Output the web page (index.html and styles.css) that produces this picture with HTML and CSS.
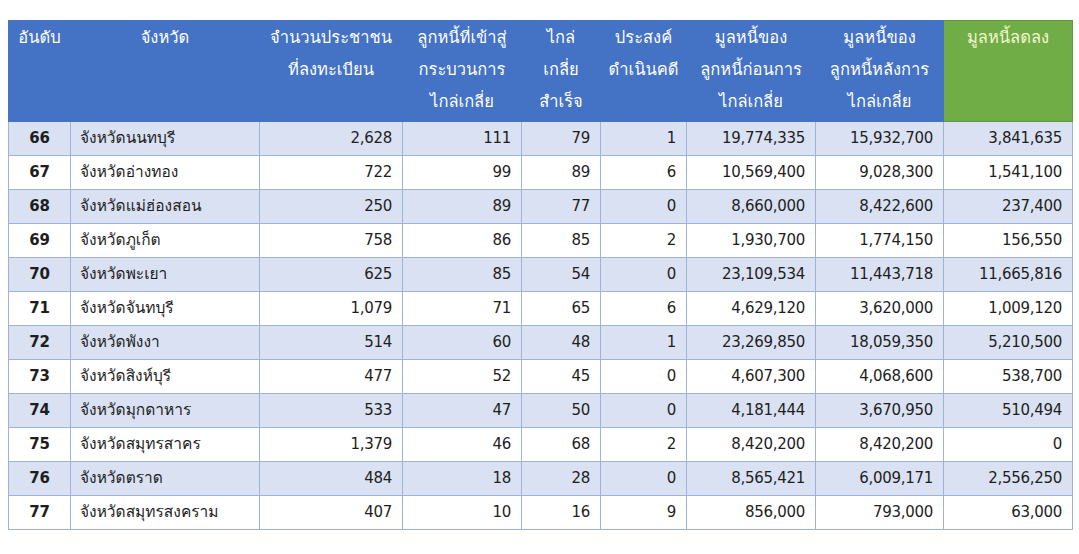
FILE: index.html
```html
<!DOCTYPE html>
<html lang="th">
<head>
<meta charset="utf-8">
<title>ตารางมูลหนี้</title>
<link rel="stylesheet" href="styles.css">
</head>
<body>
<table class="debt-table">
  <colgroup>
    <col class="c-rank"><col class="c-prov"><col class="c-pop"><col class="c-debtor"><col class="c-ok"><col class="c-sue"><col class="c-before"><col class="c-after"><col class="c-diff">
  </colgroup>
  <thead>
    <tr>
      <th>อันดับ</th>
      <th>จังหวัด</th>
      <th>จำนวนประชาชน<br>ที่ลงทะเบียน</th>
      <th>ลูกหนี้ที่เข้าสู่<br>กระบวนการ<br>ไกล่เกลี่ย</th>
      <th>ไกล่<br>เกลี่ย<br>สำเร็จ</th>
      <th>ประสงค์<br>ดำเนินคดี</th>
      <th>มูลหนี้ของ<br>ลูกหนี้ก่อนการ<br>ไกล่เกลี่ย</th>
      <th>มูลหนี้ของ<br>ลูกหนี้หลังการ<br>ไกล่เกลี่ย</th>
      <th class="th-green">มูลหนี้ลดลง</th>
    </tr>
  </thead>
  <tbody>
    <tr><td class="rank">66</td><td class="prov">จังหวัดนนทบุรี</td><td>2,628</td><td>111</td><td>79</td><td>1</td><td>19,774,335</td><td>15,932,700</td><td>3,841,635</td></tr>
    <tr><td class="rank">67</td><td class="prov">จังหวัดอ่างทอง</td><td>722</td><td>99</td><td>89</td><td>6</td><td>10,569,400</td><td>9,028,300</td><td>1,541,100</td></tr>
    <tr><td class="rank">68</td><td class="prov">จังหวัดแม่ฮ่องสอน</td><td>250</td><td>89</td><td>77</td><td>0</td><td>8,660,000</td><td>8,422,600</td><td>237,400</td></tr>
    <tr><td class="rank">69</td><td class="prov">จังหวัดภูเก็ต</td><td>758</td><td>86</td><td>85</td><td>2</td><td>1,930,700</td><td>1,774,150</td><td>156,550</td></tr>
    <tr><td class="rank">70</td><td class="prov">จังหวัดพะเยา</td><td>625</td><td>85</td><td>54</td><td>0</td><td>23,109,534</td><td>11,443,718</td><td>11,665,816</td></tr>
    <tr><td class="rank">71</td><td class="prov">จังหวัดจันทบุรี</td><td>1,079</td><td>71</td><td>65</td><td>6</td><td>4,629,120</td><td>3,620,000</td><td>1,009,120</td></tr>
    <tr><td class="rank">72</td><td class="prov">จังหวัดพังงา</td><td>514</td><td>60</td><td>48</td><td>1</td><td>23,269,850</td><td>18,059,350</td><td>5,210,500</td></tr>
    <tr><td class="rank">73</td><td class="prov">จังหวัดสิงห์บุรี</td><td>477</td><td>52</td><td>45</td><td>0</td><td>4,607,300</td><td>4,068,600</td><td>538,700</td></tr>
    <tr><td class="rank">74</td><td class="prov">จังหวัดมุกดาหาร</td><td>533</td><td>47</td><td>50</td><td>0</td><td>4,181,444</td><td>3,670,950</td><td>510,494</td></tr>
    <tr><td class="rank">75</td><td class="prov">จังหวัดสมุทรสาคร</td><td>1,379</td><td>46</td><td>68</td><td>2</td><td>8,420,200</td><td>8,420,200</td><td>0</td></tr>
    <tr><td class="rank">76</td><td class="prov">จังหวัดตราด</td><td>484</td><td>18</td><td>28</td><td>0</td><td>8,565,421</td><td>6,009,171</td><td>2,556,250</td></tr>
    <tr><td class="rank">77</td><td class="prov">จังหวัดสมุทรสงคราม</td><td>407</td><td>10</td><td>16</td><td>9</td><td>856,000</td><td>793,000</td><td>63,000</td></tr>
  </tbody>
</table>
</body>
</html>
```
FILE: styles.css
```css
html, body {
  background: #ffffff;
}
body {
  margin: 20px 0 0 8px;
  font-family: "DejaVu Sans", "Loma", "Waree", "Garuda", "Tahoma", "Noto Sans Thai", "Noto Sans Thai UI", "Noto Sans", sans-serif;
  font-size: 15px;
  color: #1e1e1e;
}
.debt-table {
  border-collapse: collapse;
  table-layout: fixed;
  width: 1064px;
}
.c-rank { width: 62px; }
.c-prov { width: 189px; }
.c-pop { width: 143px; }
.c-debtor { width: 119px; }
.c-ok { width: 79px; }
.c-sue { width: 86px; }
.c-before { width: 129px; }
.c-after { width: 128px; }
.c-diff { width: 129px; }

.debt-table th {
  background: #4472c4;
  color: #ffffff;
  font-weight: normal;
  font-size: 16.5px;
  text-align: center;
  vertical-align: top;
  height: 101px;
  box-sizing: border-box;
  padding: 1px 2px 0;
  line-height: 32px;
  border: 1px solid #4472c4;
  white-space: nowrap;
}
.debt-table th.th-green {
  background: #70ad47;
  color: #f3f7cf;
  border: 1px solid #5f9a3a;
}
.debt-table td {
  height: 34px;
  box-sizing: border-box;
  padding: 0 10px;
  line-height: 33px;
  text-align: right;
  border: 1px solid #9fb3d9;
  white-space: nowrap;
  letter-spacing: -0.3px;
}
.debt-table tbody tr:nth-child(odd) td {
  background: #d9e1f2;
}
.debt-table td.rank {
  text-align: center;
  font-weight: bold;
  padding: 0;
}
.debt-table td.prov {
  text-align: left;
  padding-left: 9px;
  letter-spacing: 0;
  font-size: 15.5px;
}
```
